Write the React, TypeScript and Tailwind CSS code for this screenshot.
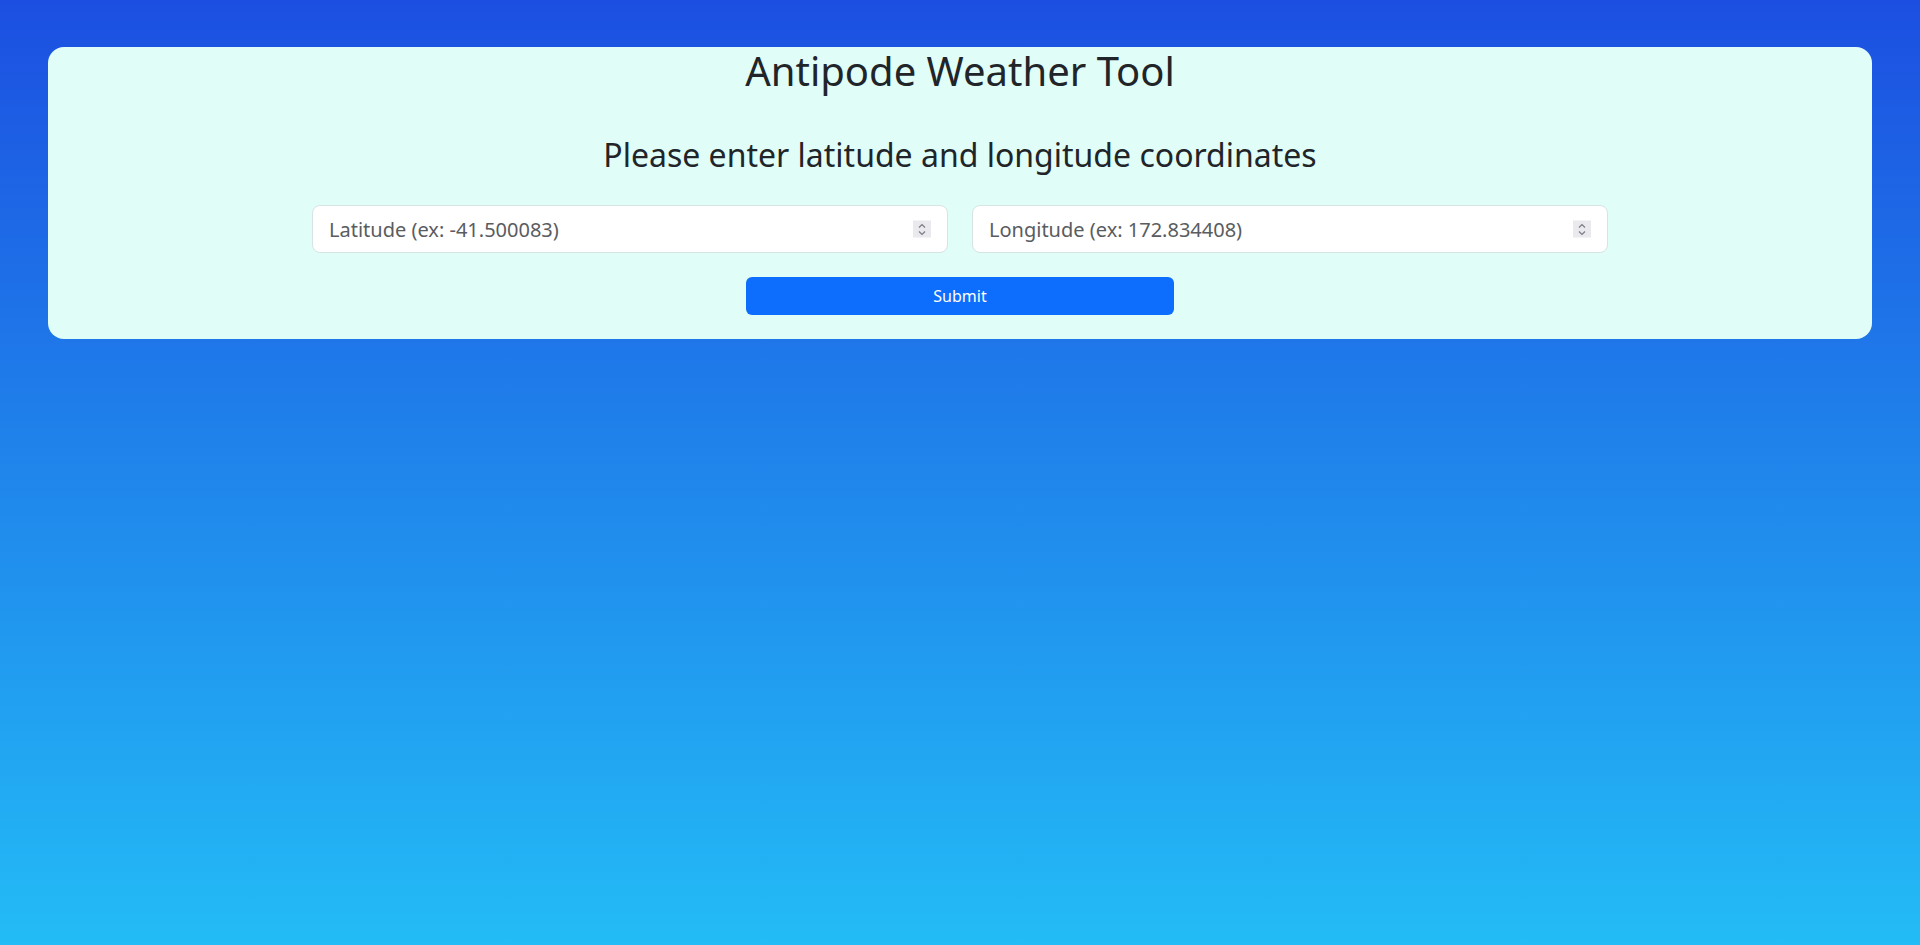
import React from 'react'

function Spinner() {
  return (
    <span className="pointer-events-none absolute top-1/2 right-[17px] flex h-[17px] w-[18px] -translate-y-1/2 items-center justify-center bg-[#e9e9ee]">
      <svg width="10" height="14" viewBox="0 0 10 14" fill="none" stroke="#7a7d85" strokeWidth="1.2">
        <path d="M2 5 L5 2 L8 5" />
        <path d="M2 9 L5 12 L8 9" />
      </svg>
    </span>
  )
}

function CoordInput({ placeholder }: { placeholder: string }) {
  return (
    <div className="relative">
      <input
        type="text"
        inputMode="decimal"
        placeholder={placeholder}
        className="h-12 w-full rounded-lg border border-[#d6e4e3] bg-white px-4 text-xl leading-normal text-[#212529] placeholder:text-[#595c60] outline-none"
      />
      <Spinner />
    </div>
  )
}

export default function App() {
  return (
    <div
      className="min-h-screen bg-[linear-gradient(to_bottom,#1c4fe1,#23bcf6)] px-12 pt-[47px]"
      style={{ fontFamily: '"Noto Sans", "Open Sans", sans-serif' }}
    >
      <div className="rounded-2xl bg-[#e0fdf8] pb-6 text-center text-[#212529]">
        <h1 className="text-[40px] leading-[1.2]">Antipode Weather Tool</h1>
        <h2 className="mt-[41px] text-[32px] leading-[1.2]">Please enter latitude and longitude coordinates</h2>
        <form className="mx-auto mt-[31px] w-[1296px]" onSubmit={e => e.preventDefault()}>
          <div className="grid grid-cols-2 gap-6">
            <CoordInput placeholder="Latitude (ex: -41.500083)" />
            <CoordInput placeholder="Longitude (ex: 172.834408)" />
          </div>
          <button
            type="submit"
            className="mx-auto mt-6 block h-[38px] w-[428px] rounded-md bg-[#0d6efd] text-base text-white"
          >
            Submit
          </button>
        </form>
      </div>
    </div>
  )
}
